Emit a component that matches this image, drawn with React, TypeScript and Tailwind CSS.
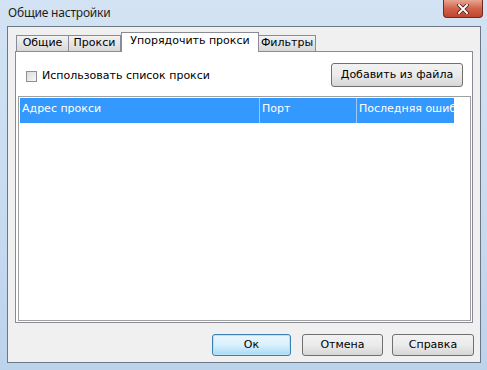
export default function App() {
  const font = "font-['DejaVu_Sans',Verdana,sans-serif]";
  return (
    <div className="w-[487px] h-[370px] flex flex-col bg-gradient-to-b from-[#d3e3f4] via-[#c9dcf1] to-[#bcd3ec] overflow-hidden">
      {/* title bar */}
      <div className="h-[26px] flex items-start justify-between pl-[8px] pr-[4px] shrink-0">
        <span className="mt-[4px] text-[12px] text-[#1e1e1e] font-['Noto_Sans',sans-serif] tracking-[-0.2px]">
          Общие настройки
        </span>
        <div className="w-[40px] h-[18px] rounded-b-[4px] border border-t-0 border-[#6d2a22] bg-gradient-to-b from-[#e8a493] via-[#d1624a] to-[#c0452d] flex items-center justify-center">
          <svg width="12" height="10" viewBox="0 0 12 10">
            <path d="M2 1 L10 9 M10 1 L2 9" stroke="#3b1510" strokeWidth="3.4" strokeLinecap="square" />
            <path d="M2 1 L10 9 M10 1 L2 9" stroke="#ffffff" strokeWidth="2" strokeLinecap="square" />
          </svg>
        </div>
      </div>

      {/* client area */}
      <div className={`flex-1 ml-[7px] mr-[6px] mb-[7px] border border-[#6c7684] bg-[#f0f0f0] flex flex-col pl-[7px] pr-[7px] pt-[5px] ${font} text-[11px] text-black`}>
        {/* tabs */}
        <div className="h-[20px] flex items-end pl-[1px] -mb-px relative z-10">
          <div className="w-[53px] h-[17px] flex items-center justify-center border border-[#898c95] bg-gradient-to-b from-[#f2f2f2] to-[#d8d8d8]">
            Общие
          </div>
          <div className="w-[52px] h-[17px] flex items-center justify-center border border-l-0 border-[#898c95] bg-gradient-to-b from-[#f2f2f2] to-[#d8d8d8]">
            Прокси
          </div>
          <div className="w-[138px] h-[20px] pb-[3px] flex items-center justify-center border border-b-0 border-[#898c95] bg-white">
            Упорядочить прокси
          </div>
          <div className="w-[57px] h-[17px] flex items-center justify-center border border-l-0 border-[#898c95] bg-gradient-to-b from-[#f2f2f2] to-[#d8d8d8]">
            Фильтры
          </div>
        </div>

        {/* tab panel */}
        <div className="h-[272px] border border-[#898c95] bg-white flex flex-col pl-[2px] pr-[1px] pb-[1px]">
          <div className="h-[44px] flex items-center justify-between pl-[8px] pr-[8px] pt-[2px]">
            <label className="flex items-center gap-[5px] mt-[2px]">
              <span className="w-[11px] h-[11px] border border-[#8f8f8f] bg-gradient-to-br from-[#dcdcdc] to-[#f8f8f8]" />
              <span>Использовать список прокси</span>
            </label>
            <button className="w-[132px] h-[24px] rounded-[3px] border border-[#707070] bg-gradient-to-b from-[#f2f2f2] via-[#ebebeb] to-[#d6d6d6] text-[11px]">
              Добавить из файла
            </button>
          </div>
          <div className="flex-1 border border-[#a0a0a0] bg-white pl-[1px] pt-[1px]">
            <div className="w-[434px] h-[25px] bg-[#3399ff] text-white flex overflow-hidden">
              <div className="w-[240px] pl-[2px] pt-[3px] border-r border-[#9cc9f5]">Адрес прокси</div>
              <div className="w-[97px] pl-[2px] pt-[3px] border-r border-[#9cc9f5]">Порт</div>
              <div className="flex-1 pl-[2px] pt-[3px] whitespace-nowrap overflow-hidden">Последняя ошибка</div>
            </div>
          </div>
        </div>

        {/* bottom buttons */}
        <div className="flex justify-end pt-[11px] -mr-px">
          <button className="w-[79px] h-[22px] rounded-[3px] border border-[#3c7fb1] bg-gradient-to-b from-[#eaf6fd] via-[#d9f0fc] to-[#a7d9f5] shadow-[inset_0_0_0_1px_#b8e3fb]">
            Ок
          </button>
          <button className="ml-[11px] w-[81px] h-[22px] rounded-[3px] border border-[#707070] bg-gradient-to-b from-[#f2f2f2] via-[#ebebeb] to-[#d6d6d6]">
            Отмена
          </button>
          <button className="ml-[9px] w-[82px] h-[22px] rounded-[3px] border border-[#707070] bg-gradient-to-b from-[#f2f2f2] via-[#ebebeb] to-[#d6d6d6]">
            Справка
          </button>
        </div>
      </div>
    </div>
  );
}
